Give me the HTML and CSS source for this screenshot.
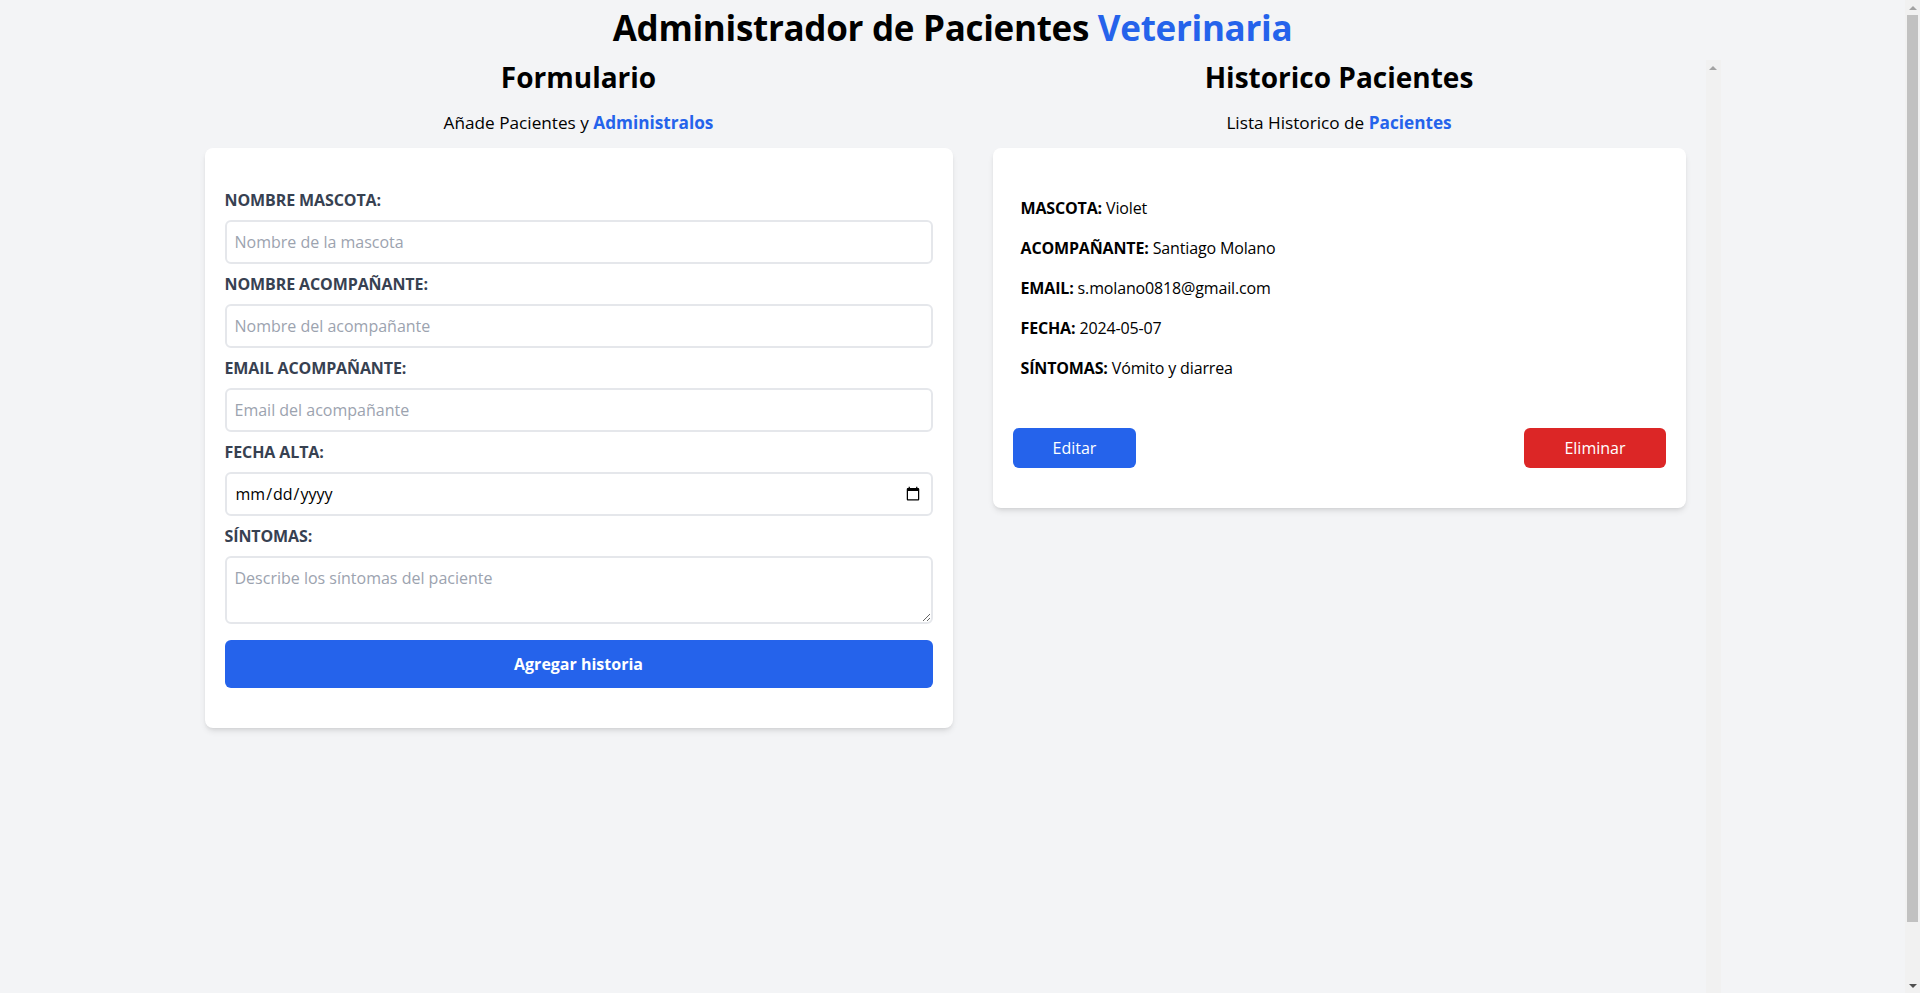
FILE: index.html
```html
<!DOCTYPE html>
<html lang="es">
<head>
<meta charset="utf-8">
<title>Administrador de Pacientes Veterinaria</title>
<link rel="stylesheet" href="styles.css">
</head>
<body>
<div class="viewport">
  <div class="page">
    <div class="container">
      <h1 class="title">Administrador de Pacientes <span class="accent">Veterinaria</span></h1>
      <div class="main">
        <div class="col-form">
          <h2 class="col-title">Formulario</h2>
          <p class="col-sub">Añade Pacientes y <span class="accent strong">Administralos</span></p>
          <form class="card form-card">
            <div class="field">
              <label class="label" for="mascota">Nombre Mascota:</label>
              <input id="mascota" class="input" type="text" placeholder="Nombre de la mascota">
            </div>
            <div class="field">
              <label class="label" for="acompanante">Nombre Acompañante:</label>
              <input id="acompanante" class="input" type="text" placeholder="Nombre del acompañante">
            </div>
            <div class="field">
              <label class="label" for="email">Email Acompañante:</label>
              <input id="email" class="input" type="email" placeholder="Email del acompañante">
            </div>
            <div class="field">
              <label class="label" for="alta">Fecha Alta:</label>
              <input id="alta" class="input" type="date">
            </div>
            <div class="field field-last">
              <label class="label" for="sintomas">Síntomas:</label>
              <textarea id="sintomas" class="input textarea" rows="2" placeholder="Describe los síntomas del paciente"></textarea>
            </div>
            <button type="submit" class="btn-submit">Agregar historia</button>
          </form>
        </div>
        <div class="col-list">
          <div class="list-content">
            <h2 class="col-title">Historico Pacientes</h2>
            <p class="col-sub">Lista Historico de <span class="accent strong">Pacientes</span></p>
            <div class="card patient">
              <div class="patient-info">
                <p><b>Mascota:</b> Violet</p>
                <p><b>Acompañante:</b> Santiago Molano</p>
                <p><b>Email:</b> s.molano0818@gmail.com</p>
                <p><b>Fecha:</b> 2024-05-07</p>
                <p><b>Síntomas:</b> Vómito y diarrea</p>
              </div>
              <div class="actions">
                <button type="button" class="btn btn-edit">Editar</button>
                <button type="button" class="btn btn-delete">Eliminar</button>
              </div>
            </div>
          </div>
          <div class="scrollbar scrollbar-inner" aria-hidden="true">
            <div class="sb-arrow">
              <svg width="8" height="4" viewBox="0 0 8 4"><path d="M0 4 L4 0 L8 4 Z" fill="#a3a3a3"/></svg>
            </div>
          </div>
        </div>
      </div>
    </div>
  </div>
  <div class="scrollbar scrollbar-page" aria-hidden="true">
    <div class="sb-arrow">
      <svg width="8" height="4" viewBox="0 0 8 4"><path d="M0 4 L4 0 L8 4 Z" fill="#a3a3a3"/></svg>
    </div>
    <div class="sb-thumb"></div>
    <div class="sb-spacer"></div>
    <div class="sb-arrow">
      <svg width="8" height="4" viewBox="0 0 8 4"><path d="M0 0 L8 0 L4 4 Z" fill="#505050"/></svg>
    </div>
  </div>
</div>
</body>
</html>
```

FILE: styles.css
```css
* {
  box-sizing: border-box;
}

html,
body {
  margin: 0;
  padding: 0;
}

body {
  background: #f3f4f6;
  font-family: "Open Sans", "Noto Sans", sans-serif;
  color: #000;
  font-size: 16px;
  line-height: 24px;
}

.viewport {
  display: flex;
  align-items: flex-start;
}

.page {
  flex: 1 1 auto;
  min-width: 0;
}

.container {
  max-width: 1536px;
  margin: 0 auto;
}

.title {
  margin: 0;
  padding-top: 6px;
  height: 60px;
  font-size: 35px;
  line-height: 44px;
  font-weight: 700;
  text-align: center;
  letter-spacing: -0.3px;
}

.accent {
  color: #2563eb;
}

.strong {
  font-weight: 700;
}

.main {
  display: flex;
}

.col-form {
  flex: 0 1 50%;
  margin: 0 20px;
}

.col-list {
  flex: 0 1 50%;
  height: 100vh;
  display: flex;
}

.list-content {
  flex: 1 1 auto;
  min-width: 0;
}

.col-title {
  margin: 0;
  font-size: 28px;
  line-height: 34px;
  font-weight: 700;
  text-align: center;
}

.col-sub {
  margin: 15px 0 11px;
  font-size: 17.2px;
  line-height: 28px;
  text-align: center;
}

.card {
  background: #fff;
  box-shadow: 0 4px 6px -1px rgba(0, 0, 0, 0.1), 0 2px 4px -2px rgba(0, 0, 0, 0.1);
  border-radius: 8px;
}

.form-card {
  display: block;
  padding: 40px 20px;
  margin-bottom: 40px;
}

.field {
  margin-bottom: 8px;
}

.field-last {
  margin-bottom: 16px;
}

.label {
  display: block;
  color: #374151;
  font-weight: 700;
  text-transform: uppercase;
  font-size: 16px;
  line-height: 24px;
  letter-spacing: -0.1px;
}

.input {
  display: block;
  width: 100%;
  height: 44px;
  margin-top: 8px;
  padding: 8px;
  border: 2px solid #e5e7eb;
  border-radius: 6px;
  font-family: inherit;
  font-size: 16px;
  line-height: 24px;
  color: #000;
  background: #fff;
}

.input::placeholder {
  color: #9ca3af;
}

.textarea {
  height: 68px;
  resize: vertical;
}

.btn-submit {
  display: block;
  width: 100%;
  height: 48px;
  border: 0;
  border-radius: 6px;
  background: #2563eb;
  color: #fff;
  font-family: inherit;
  font-size: 16px;
  font-weight: 700;
  line-height: 24px;
  cursor: pointer;
}

.patient {
  margin: 0 20px 40px;
  padding: 40px 20px;
}

.patient-info {
  padding: 8px;
}

.patient-info p {
  margin: 0 0 16px;
  font-size: 16px;
  line-height: 24px;
  letter-spacing: -0.15px;
}

.patient-info b {
  font-weight: 700;
  text-transform: uppercase;
}

.actions {
  display: flex;
  justify-content: space-between;
  margin-top: 24px;
}

.btn {
  padding: 8px 40px;
  border: 0;
  border-radius: 6px;
  color: #fff;
  font-family: inherit;
  font-size: 16px;
  line-height: 24px;
  cursor: pointer;
}

.btn-edit {
  background: #2563eb;
}

.btn-delete {
  background: #dc2626;
}

/* drawn scrollbars, as in the reference capture */
.scrollbar {
  flex: 0 0 15px;
  width: 15px;
  background: #f1f1f1;
  display: flex;
  flex-direction: column;
}

.scrollbar-page {
  height: 100vh;
}

.scrollbar-inner {
  height: 100%;
}

.sb-arrow {
  flex: 0 0 15px;
  height: 15px;
  display: flex;
  align-items: center;
  justify-content: center;
}

.sb-arrow svg {
  display: block;
}

.sb-thumb {
  flex: 0 0 907px;
  margin: 0 2px;
  background: #c1c1c1;
}

.sb-spacer {
  flex: 1 1 auto;
}
```
